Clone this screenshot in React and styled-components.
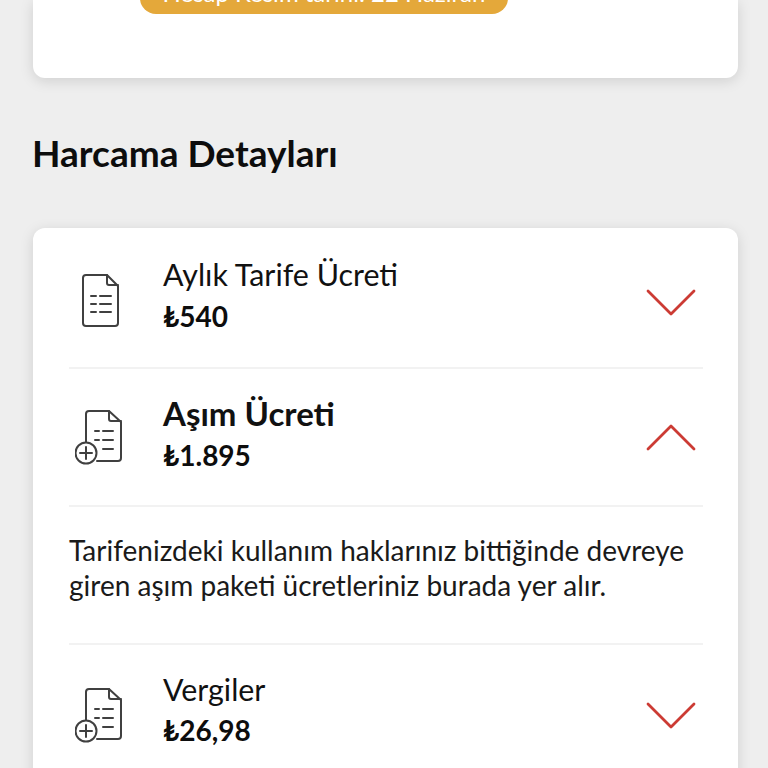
import React from "react";
import styled, { createGlobalStyle } from "styled-components";

const Global = createGlobalStyle`
  html, body { margin: 0; padding: 0; background: #eeeeee; }
  body { font-family: "Lato", "Noto Sans", sans-serif; color: #111; }
`;
const Page = styled.div`
  width: 768px; height: 768px; overflow: hidden; background: #eeeeee;
  padding: 0 30px 0 33px; box-sizing: border-box;
`;
const TopCard = styled.section`
  height: 78px; background: #fff; border-radius: 0 0 12px 12px;
  box-shadow: 0 3px 14px rgba(0,0,0,.13); overflow: hidden;
  padding-left: 107px;
`;
const Pill = styled.div`
  width: 368px; height: 40px; margin-top: -26px; background: #e4a83a;
  border-radius: 0 0 16px 16px; color: #fff; font-size: 24px; line-height: 38px;
  text-align: center; box-sizing: border-box;
`;
const Heading = styled.h2`
  margin: 51px 0 52px -1px; font-size: 37px; line-height: 47px; font-weight: 700;
  color: #0d0d0d;
`;
const Card = styled.section`
  background: #fff; border-radius: 12px; box-shadow: 0 3px 14px rgba(0,0,0,.13);
  padding: 0 35px 0 36px; height: 620px;
`;
const Row = styled.div`
  display: flex; align-items: center; height: ${p => p.$h}px;
  border-bottom: ${p => (p.$line ? "2px solid #f2f2f2" : "none")};
  box-sizing: border-box;
`;
const IconSlot = styled.div`
  width: 94px; flex: none; display: flex; box-sizing: border-box;
  padding: ${p => p.$top || 0}px 0 ${p => p.$bottom || 0}px ${p => p.$pad}px;
`;
const Texts = styled.div`
  flex: 1; display: flex; flex-direction: column; gap: ${p => p.$gap ?? 4}px;
  padding-bottom: ${p => p.$lift ?? 4}px;
`;
const Title = styled.div`
  font-size: ${p => (p.$bold ? 33 : 30.4)}px; line-height: 38px;
  font-weight: ${p => (p.$bold ? 700 : 400)}; color: #111;
`;
const Price = styled.div`font-size: 28px; line-height: 38px; font-weight: 700; color: #0d0d0d;`;
const Chevron = styled.svg`
  width: 50px; height: 30px; flex: none; margin: ${p => p.$top || 0}px 7px 0 0;
`;
const Description = styled.p`
  margin: 0; height: 138px; box-sizing: border-box; padding-top: 26px;
  border-bottom: 2px solid #f2f2f2; font-size: 28px; line-height: 35px; color: #1a1a1a;
`;

const DocIcon = () => (
  <svg width="39" height="55" viewBox="0 0 39 55" fill="none" stroke="#404040" strokeWidth="2" strokeLinecap="round" strokeLinejoin="round">
    <path d="M26 2H5Q2 2 2 5V50Q2 53 5 53H34Q37 53 37 50V13Z" />
    <path d="M26 2V10Q26 12 28 12H37" />
    <path d="M10 23H15M19 23H30M10 31H15M19 31H30M10 39H15M19 39H30" />
  </svg>
);
const DocPlusIcon = () => (
  <svg width="50" height="58" viewBox="0 0 50 58" fill="none" stroke="#404040" strokeWidth="2" strokeLinecap="round" strokeLinejoin="round">
    <path d="M11 34V6Q11 3 14 3H34L46 14V50Q46 53 43 53H22" />
    <path d="M34 3V11Q34 13 36 13H46" />
    <path d="M20 23H24M28 23H38M20 32H24M28 32H38M28 41H38" />
    <circle cx="11" cy="45" r="10.5" />
    <path d="M11 39V51M5 45H17" />
  </svg>
);
const Down = ({ top }) => (
  <Chevron $top={top} viewBox="0 0 50 30" fill="none" stroke="#cc3b34" strokeWidth="2.8" strokeLinecap="round" strokeLinejoin="round">
    <path d="M2 3L25 26L48 3" />
  </Chevron>
);
const Up = () => (
  <Chevron viewBox="0 0 50 30" fill="none" stroke="#cc3b34" strokeWidth="2.8" strokeLinecap="round" strokeLinejoin="round">
    <path d="M2 27L25 4L48 27" />
  </Chevron>
);

export default function App() {
  return (
    <Page>
      <Global />
      <TopCard><Pill>Hesap Kesim tarihi: 22 Haziran</Pill></TopCard>
      <Heading>Harcama Detayları</Heading>
      <Card>
        <Row $h={141} $line>
          <IconSlot $pad={12} $top={5}><DocIcon /></IconSlot>
          <Texts $lift={5}><Title>Aylık Tarife Ücreti</Title><Price>₺540</Price></Texts>
          <Down top={10} />
        </Row>
        <Row $h={138} $line>
          <IconSlot $pad={6}><DocPlusIcon /></IconSlot>
          <Texts $lift={6}><Title $bold>Aşım Ücreti</Title><Price>₺1.895</Price></Texts>
          <Up />
        </Row>
        <Description>Tarifenizdeki kullanım haklarınız bittiğinde devreye<br />giren aşım paketi ücretleriniz burada yer alır.</Description>
        <Row $h={142}>
          <IconSlot $pad={6} $bottom={2}><DocPlusIcon /></IconSlot>
          <Texts $lift={13} $gap={3}><Title>Vergiler</Title><Price>₺26,98</Price></Texts>
          <Down />
        </Row>
      </Card>
    </Page>
  );
}
